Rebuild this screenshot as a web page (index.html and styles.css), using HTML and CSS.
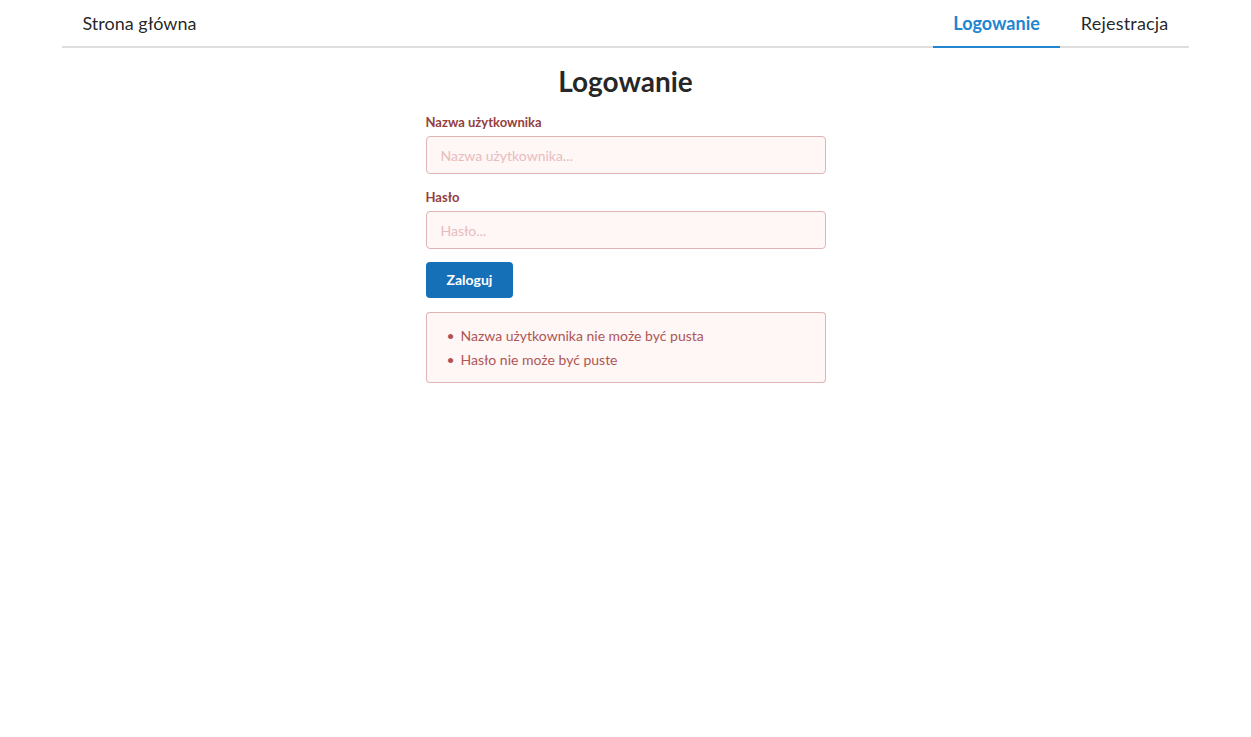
FILE: index.html
```html
<!DOCTYPE html>
<html lang="pl">
<head>
<meta charset="utf-8">
<title>Logowanie</title>
<link rel="stylesheet" href="styles.css">
</head>
<body>
<div class="container">
  <nav class="menu">
    <a class="item" href="#">Strona główna</a>
    <div class="right">
      <a class="item active" href="#">Logowanie</a>
      <a class="item item-last" href="#">Rejestracja</a>
    </div>
  </nav>
  <h1 class="title">Logowanie</h1>
  <form class="form">
    <div class="field">
      <label class="label" for="u">Nazwa użytkownika</label>
      <input class="input" id="u" type="text" placeholder="Nazwa użytkownika...">
    </div>
    <div class="field">
      <label class="label" for="p">Hasło</label>
      <input class="input" id="p" type="password" placeholder="Hasło...">
    </div>
    <button class="button" type="button">Zaloguj</button>
    <div class="message">
      <ul class="list">
        <li>Nazwa użytkownika nie może być pusta</li>
        <li>Hasło nie może być puste</li>
      </ul>
    </div>
  </form>
</div>
</body>
</html>
```
FILE: styles.css
```css
html, body {
  margin: 0;
  padding: 0;
  background: #fff;
}
body {
  font-family: Lato, "Helvetica Neue", Arial, sans-serif;
  font-size: 14px;
  line-height: 20px;
  color: rgba(0, 0, 0, 0.87);
}
.container {
  width: 1127px;
  margin: 0 auto;
}
.menu {
  display: flex;
  justify-content: space-between;
  border-bottom: 2px solid rgba(34, 36, 38, 0.15);
  font-size: 18px;
}
.right {
  display: flex;
}
.item {
  display: block;
  padding: 14px 20.5px 14px;
  line-height: 18px;
  color: rgba(0, 0, 0, 0.87);
  text-decoration: none;
  border-bottom: 2px solid transparent;
  margin-bottom: -2px;
}
.item-last {
  letter-spacing: 0.2px;
}
.item.active {
  color: #2185d0;
  font-weight: 700;
  border-bottom-color: #2185d0;
}
.title {
  margin: 15px 0 13px;
  font-size: 28px;
  line-height: 36px;
  font-weight: 700;
  text-align: center;
  color: rgba(0, 0, 0, 0.87);
}
.form {
  width: 400px;
  margin: 0 auto;
}
.field {
  margin-bottom: 13px;
}
.label {
  display: block;
  margin: 0 0 4px;
  font-size: 13px;
  font-weight: 700;
  color: #93403e;
}
.input {
  display: block;
  box-sizing: border-box;
  width: 100%;
  height: 38px;
  margin: 0;
  padding: 9.5px 14px;
  font-family: inherit;
  font-size: 14px;
  line-height: 17px;
  color: #9f3a38;
  background: #fff6f6;
  border: 1px solid #e0b4b4;
  border-radius: 4px;
  outline: none;
}
.input::placeholder {
  color: #e7bdbc;
}
.button {
  display: block;
  margin: 1px 0 0;
  padding: 11px 21px;
  font-family: inherit;
  font-size: 14px;
  line-height: 14px;
  font-weight: 700;
  color: #fff;
  background: #1670b7;
  border: none;
  border-radius: 4px;
}
.message {
  margin: 14px 0;
  padding: 14px 21px 13px;
  background: #fff6f6;
  color: #9f3a38;
  border-radius: 4px;
  box-shadow: inset 0 0 0 1px #e0b4b4;
}
.list {
  margin: 0;
  padding: 0;
  list-style: none;
  opacity: 0.85;
}
.list li {
  position: relative;
  margin: 0 0 4px 14px;
  line-height: 20px;
}
.list li:last-child {
  margin-bottom: 0;
}
.list li::before {
  content: "•";
  position: absolute;
  left: -14px;
}
```
